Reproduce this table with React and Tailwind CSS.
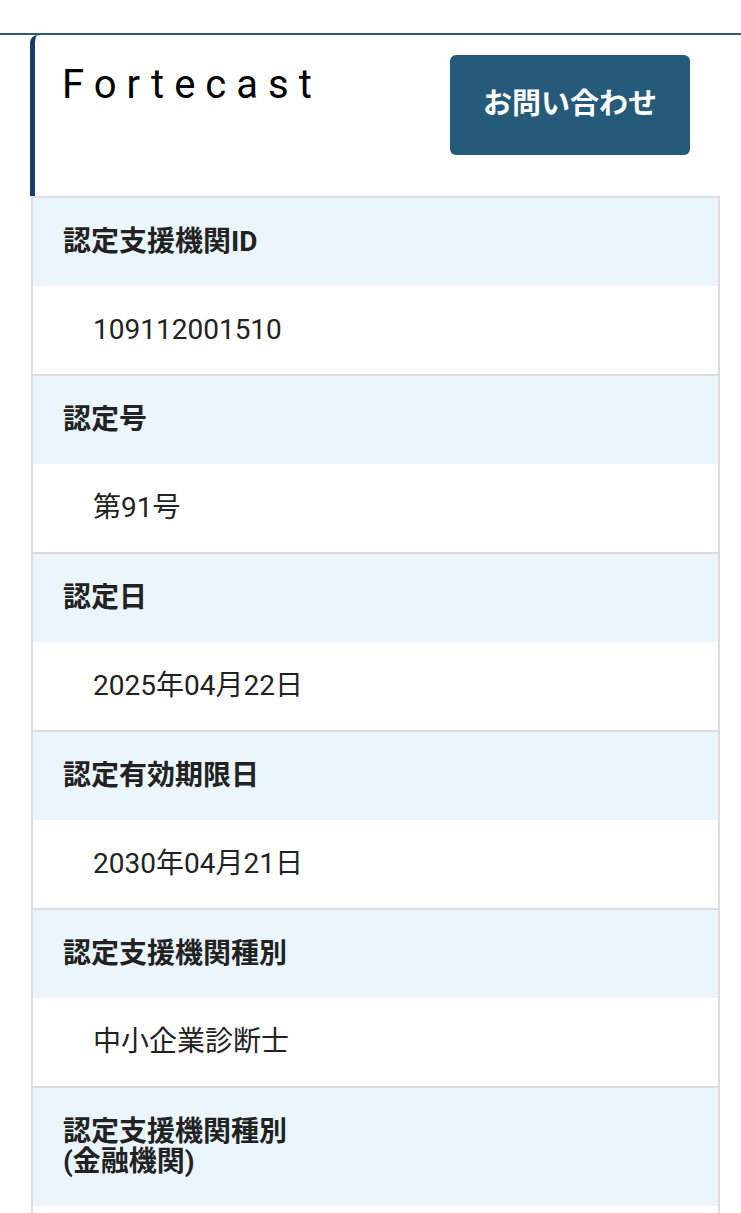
import React from 'react';

const rows = [
  { label: '認定支援機関ID', value: '109112001510' },
  { label: '認定号', value: '第91号' },
  { label: '認定日', value: '2025年04月22日' },
  { label: '認定有効期限日', value: '2030年04月21日' },
  { label: '認定支援機関種別', value: '中小企業診断士' },
  { label: '認定支援機関種別\n(金融機関)', value: '' },
];

const App = () => {
  return (
    <div
      className='w-full min-h-screen bg-white text-[#222]'
      style={{ fontFamily: 'Roboto, "Noto Sans CJK JP", sans-serif' }}
    >
      {/* Top rule */}
      <div className='h-[33px]' />
      <div className='h-[2px] bg-[#2f5a72]' />

      <div className='ml-[30px] w-[690px]'>
        {/* Header */}
        <div className='flex items-start justify-between h-[161px] border-l-[5px] border-[#1b3a6b] rounded-tl-lg pl-[27px] pr-[30px] pt-[20px]'>
          <h1 className='mt-[2px] text-[40px] leading-[56px] tracking-[0.25em] font-normal text-black'>
            Fortecast
          </h1>
          <button className='w-[240px] h-[100px] rounded-md bg-[#265a7a] text-white text-[29px] font-bold'>
            お問い合わせ
          </button>
        </div>

        {/* Detail table */}
        <div className='ml-px border-2 border-b-0 border-[#dcdcdc]'>
          {rows.map((row, i) => (
            <div key={i} className={i > 0 ? 'border-t-2 border-[#dcdcdc]' : ''}>
              <div className='bg-[#ebf6fc] px-[30px] py-[29px] text-[28px] leading-[30px] font-bold whitespace-pre-line'>
                {row.label}
              </div>
              <div className='bg-white pl-[60px] pr-[30px] py-[29px] min-h-[88px] text-[28px] leading-[30px]'>
                {row.value}
              </div>
            </div>
          ))}
        </div>
      </div>
    </div>
  );
};

export default App;
